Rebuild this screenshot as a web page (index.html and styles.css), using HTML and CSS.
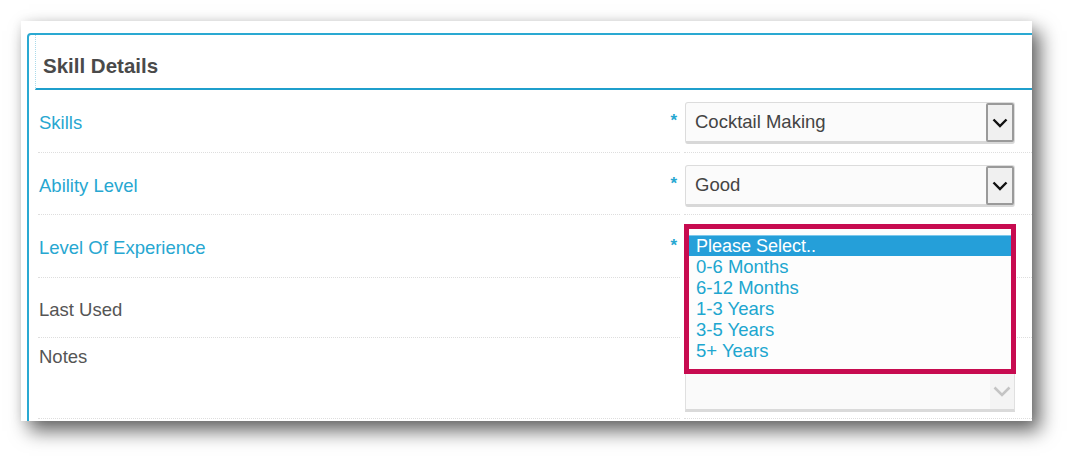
FILE: index.html
```html
<!DOCTYPE html>
<html>
<head>
<meta charset="utf-8">
<link rel="stylesheet" href="styles.css">
</head>
<body>
<div class="card">
  <div class="panel">
    <div class="panel-head"><h2 class="panel-title">Skill Details</h2></div>
    <div class="rows">
      <div class="row row-1">
        <div class="cell-label"><span class="label req">Skills</span><span class="star">*</span></div>
        <div class="cell-field">
          <div class="select"><span class="select-text">Cocktail Making</span><span class="select-btn"><svg width="16" height="10" viewBox="0 0 16 10"><path d="M1.5 1.5 L8 8 L14.5 1.5" fill="none" stroke="#111" stroke-width="2.4"/></svg></span></div>
        </div>
      </div>
      <div class="row row-2">
        <div class="cell-label"><span class="label req">Ability Level</span><span class="star">*</span></div>
        <div class="cell-field">
          <div class="select"><span class="select-text">Good</span><span class="select-btn"><svg width="16" height="10" viewBox="0 0 16 10"><path d="M1.5 1.5 L8 8 L14.5 1.5" fill="none" stroke="#111" stroke-width="2.4"/></svg></span></div>
        </div>
      </div>
      <div class="row row-3">
        <div class="cell-label"><span class="label req">Level Of Experience</span><span class="star">*</span></div>
        <div class="cell-field">
          <div class="select"></div>
          <div class="listbox">
            <ul class="options">
              <li class="opt opt-sel">Please Select..</li>
              <li class="opt">0-6 Months</li>
              <li class="opt">6-12 Months</li>
              <li class="opt">1-3 Years</li>
              <li class="opt">3-5 Years</li>
              <li class="opt">5+ Years</li>
            </ul>
          </div>
        </div>
      </div>
      <div class="row row-last">
        <div class="cell-label"><span class="label">Last Used</span></div>
        <div class="cell-field"></div>
      </div>
      <div class="row row-notes">
        <div class="cell-label"><span class="label">Notes</span></div>
        <div class="cell-field">
          <div class="notes-box"><span class="notes-btn"><svg width="18" height="11" viewBox="0 0 18 11"><path d="M1.5 1.5 L9 9 L16.5 1.5" fill="none" stroke="#c4c4c4" stroke-width="2.6"/></svg></span></div>
        </div>
      </div>
    </div>
  </div>
</div>
</body>
</html>
```

FILE: styles.css
```css
html {
  margin: 0;
  padding: 0;
  min-height: 100%;
  background: #ffffff;
}
body {
  margin: 0;
  min-height: 456px;
  box-sizing: border-box;
  padding: 21px 0 0 21px;
  font-family: "Liberation Sans", Arial, Helvetica, sans-serif;
}
.card {
  width: 1011px;
  height: 400px;
  background: #fff;
  overflow: hidden;
  box-sizing: border-box;
  padding: 12px 0 0 6px;
  box-shadow: 8px 10px 18px rgba(0, 0, 0, 0.6), 0 0 10px rgba(0, 0, 0, 0.08);
}
.panel {
  width: 1040px;
  height: 420px;
  border: 2px solid #2aa9d2;
  border-radius: 4px 0 0 0;
  box-sizing: border-box;
}
.panel-head {
  margin-left: 6px;
  height: 55px;
  box-sizing: border-box;
  border-left: 1px dotted #a9dbeb;
  border-bottom: 2px solid #1f9fcc;
  padding: 8px 0 0 7px;
  display: flex;
  align-items: center;
}
.panel-title {
  margin: 0;
  font-size: 20.5px;
  font-weight: bold;
  color: #4a4a4a;
}
.rows {
  margin-left: 9px;
}
.row {
  display: flex;
}
.cell-label {
  width: 642px;
  box-sizing: border-box;
  display: flex;
  justify-content: space-between;
  align-items: center;
  padding-left: 1px;
  padding-right: 3px;
  padding-top: 4px;
  border-bottom: 1px dotted #dedede;
}
.cell-field {
  margin-left: 4px;
  width: 360px;
  position: relative;
  box-sizing: border-box;
  border-bottom: 1px dotted #dedede;
}
.row-1 { height: 63px; }
.row-2 { height: 62px; }
.row-3 { height: 63px; }
.row-1 .cell-field,
.row-2 .cell-field,
.row-3 .cell-field {
  padding-top: 12px;
}
.row-last {
  height: 60px;
}
.row-notes {
  height: 81px;
}
.row-notes .cell-label {
  align-items: flex-start;
  padding-top: 8px;
}
.label {
  font-size: 18.5px;
  color: #555;
}
.label.req {
  color: #27a7d1;
}
.star {
  color: #27a7d1;
  font-size: 17px;
  font-weight: bold;
  margin-top: -4px;
}
.select {
  margin-left: 1px;
  width: 330px;
  height: 42px;
  box-sizing: border-box;
  border: 1px solid #dcdcdc;
  border-bottom: 3px solid #d8d8d8;
  border-radius: 3px;
  background: #fbfbfb;
  display: flex;
  align-items: center;
  justify-content: space-between;
  padding-left: 9px;
}
.select-text {
  font-size: 18.5px;
  color: #444;
}
.select-btn {
  width: 28px;
  height: 39px;
  box-sizing: border-box;
  border: 2px solid #9a9a9a;
  border-radius: 2px;
  background: #f0f0f0;
  display: flex;
  align-items: center;
  justify-content: center;
  margin-top: 1px;
}
.listbox {
  position: absolute;
  left: 0;
  top: 9px;
  width: 332px;
  height: 150px;
  box-sizing: border-box;
  border: 5px solid #c70b50;
  background: #fdfdfd;
  padding-top: 6px;
  z-index: 2;
}
.options {
  list-style: none;
  margin: 0;
  padding: 0;
}
.opt {
  font-size: 18.5px;
  line-height: 21px;
  height: 21px;
  color: #20a6cf;
  padding-left: 7px;
  white-space: nowrap;
}
.opt-sel {
  background: #259fd9;
  color: #fff;
  border-top: 1px solid #7cc8ec;
  height: 20px;
  line-height: 20px;
  font-size: 18px;
}
.notes-box {
  margin-left: 1px;
  margin-top: 10px;
  width: 330px;
  height: 64px;
  box-sizing: border-box;
  border: 1px solid #e0e0e0;
  border-bottom: 3px solid #dadada;
  background: #fafafa;
  display: flex;
  justify-content: flex-end;
  align-items: flex-end;
}
.notes-btn {
  width: 24px;
  height: 36px;
  background: #f4f4f4;
  display: flex;
  align-items: center;
  justify-content: center;
}
```
